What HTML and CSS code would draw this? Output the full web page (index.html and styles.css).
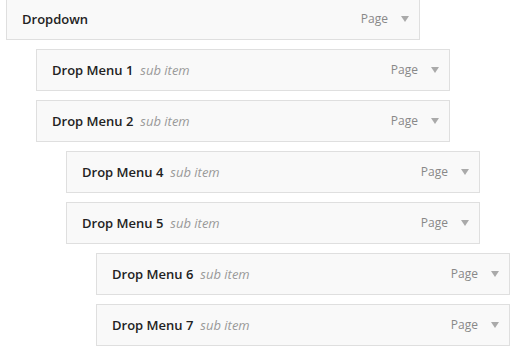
FILE: index.html
```html
<!DOCTYPE html>
<html lang="en">
<head>
    <meta charset="UTF-8">
    <meta name="viewport" content="width=device-width, initial-scale=1.0">
    <title>Menu Structure</title>
    <link rel="stylesheet" href="styles.css">
</head>
<body>
    <ul class="menu">
        <!-- top level -->
        <li class="menu-item depth-0">
            <div class="item-handle">
                <span class="item-title">Dropdown</span>
                <span class="item-controls"><span class="item-type">Page</span><span class="item-edit"></span></span>
            </div>
        </li>
        <li class="menu-item depth-1">
            <div class="item-handle">
                <span class="item-title">Drop Menu 1</span><span class="is-sub">sub item</span>
                <span class="item-controls"><span class="item-type">Page</span><span class="item-edit"></span></span>
            </div>
        </li>
        <li class="menu-item depth-1">
            <div class="item-handle">
                <span class="item-title">Drop Menu 2</span><span class="is-sub">sub item</span>
                <span class="item-controls"><span class="item-type">Page</span><span class="item-edit"></span></span>
            </div>
        </li>
        <li class="menu-item depth-2">
            <div class="item-handle">
                <span class="item-title">Drop Menu 4</span><span class="is-sub">sub item</span>
                <span class="item-controls"><span class="item-type">Page</span><span class="item-edit"></span></span>
            </div>
        </li>
        <li class="menu-item depth-2">
            <div class="item-handle">
                <span class="item-title">Drop Menu 5</span><span class="is-sub">sub item</span>
                <span class="item-controls"><span class="item-type">Page</span><span class="item-edit"></span></span>
            </div>
        </li>
        <li class="menu-item depth-3">
            <div class="item-handle">
                <span class="item-title">Drop Menu 6</span><span class="is-sub">sub item</span>
                <span class="item-controls"><span class="item-type">Page</span><span class="item-edit"></span></span>
            </div>
        </li>
        <li class="menu-item depth-3">
            <div class="item-handle">
                <span class="item-title">Drop Menu 7</span><span class="is-sub">sub item</span>
                <span class="item-controls"><span class="item-type">Page</span><span class="item-edit"></span></span>
            </div>
        </li>
    </ul>
</body>
</html>
```

FILE: styles.css
```css
body { font-family: "Open Sans", Arial, sans-serif; margin: 0; padding: 0; background-color: #fff; color: #222; }
.menu { list-style: none; margin: -2px 0 0 6px; padding: 0; }
.menu-item { margin-bottom: 9px; width: 414px; }
.depth-1 { margin-left: 30px; }
.depth-2 { margin-left: 60px; }
.depth-3 { margin-left: 90px; }
.item-handle { display: flex; align-items: center; height: 20px; padding: 10px 10px 10px 15px; background-color: #f9f9f9; border: 1px solid #dfdfdf; line-height: 20px; }
.item-title { font-size: 13px; font-weight: 600; color: #222; }
.is-sub { margin-left: 7px; font-size: 13px; font-style: italic; color: #999; }
.item-controls { display: flex; align-items: center; margin-left: auto; }
.item-type { font-size: 12px; color: #888; }
.item-edit { width: 0; height: 0; margin-left: 13px; border-left: 4px solid transparent; border-right: 4px solid transparent; border-top: 6px solid #aaa; }
```
